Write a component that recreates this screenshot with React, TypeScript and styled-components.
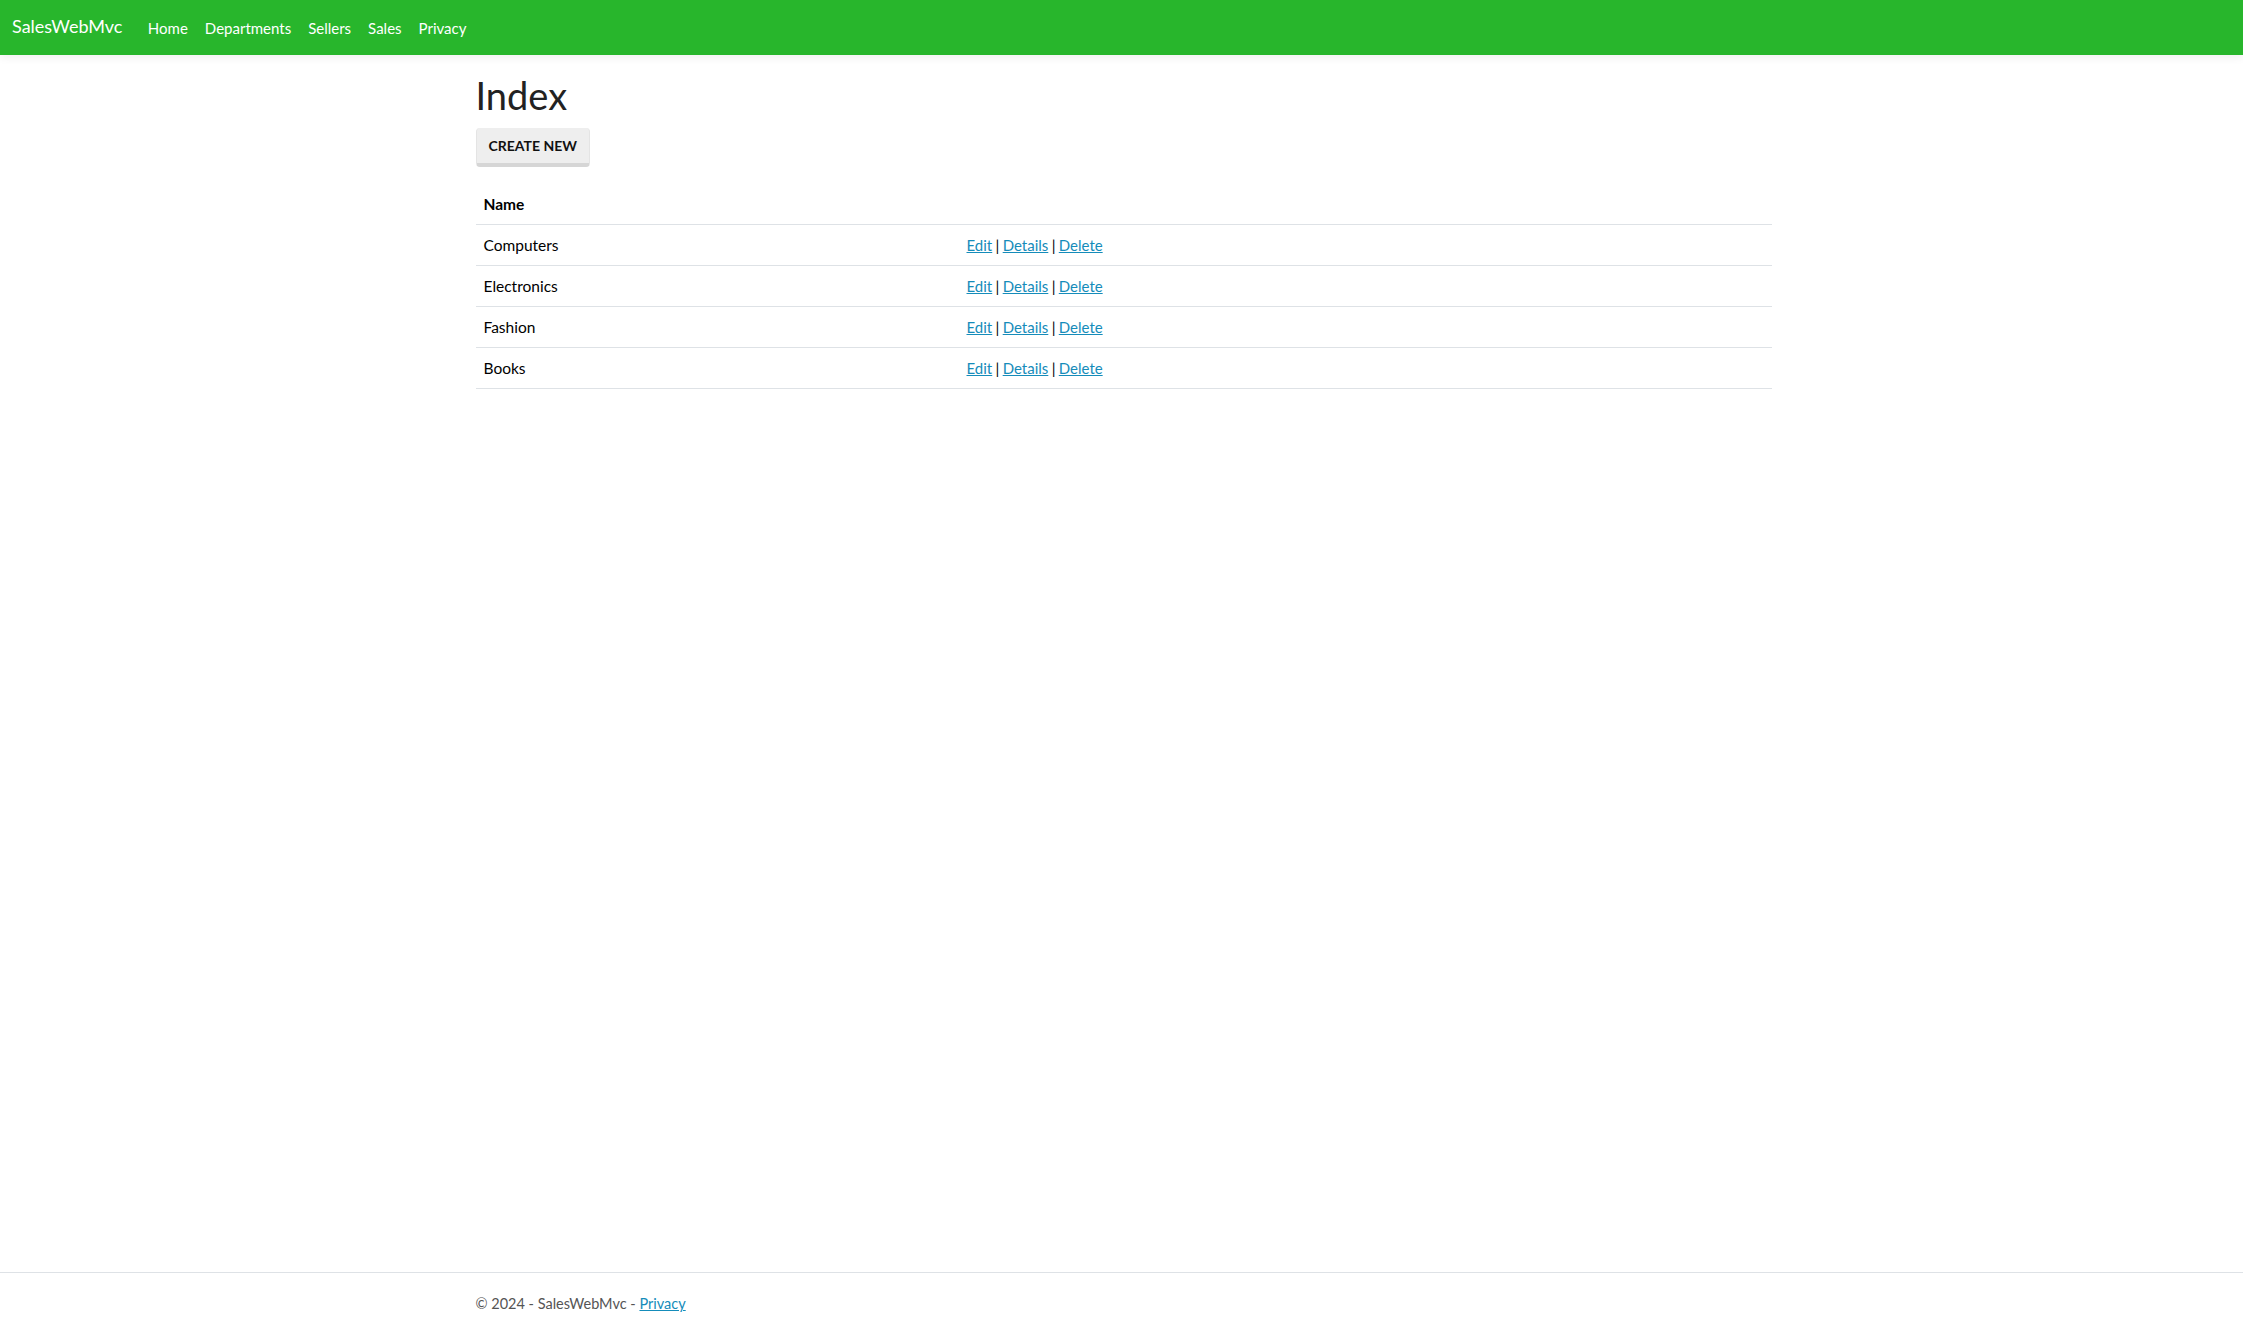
import React from "react";
import styled, { createGlobalStyle } from "styled-components";

const GlobalStyle = createGlobalStyle`
  html, body { margin: 0; padding: 0; background: #fff; }
  body {
    font-family: Lato, "Liberation Sans", sans-serif;
    font-size: 15px;
    line-height: 24px;
    color: #555;
  }
  * { box-sizing: border-box; }
`;

const Page = styled.div`
  min-height: 100vh;
  display: flex;
  flex-direction: column;
`;

const NavBar = styled.nav`
  height: 55px;
  background: #28b62c;
  box-shadow: 0 3px 8px rgba(0, 0, 0, 0.06);
  display: flex;
  align-items: center;
  padding: 0 12px;
`;

const Brand = styled.a`
  color: #fff;
  font-size: 18px;
  line-height: 24px;
  margin-right: 17px;
  margin-bottom: 3px;
  text-decoration: none;
`;

const NavList = styled.ul`
  display: flex;
  list-style: none;
  margin: 0;
  padding: 0;
`;

const NavLink = styled.a`
  display: block;
  color: #fff;
  font-size: 15px;
  line-height: 24px;
  padding: 0 8.5px;
  text-decoration: none;
`;

const Main = styled.main`
  flex: 1;
  padding-top: 17px;
`;

const Container = styled.div`
  width: 1320px;
  margin: 0 auto;
  padding: 0 10px 0 14px;
`;

const Title = styled.h1`
  margin: 0 0 10px;
  font-size: 38px;
  line-height: 46px;
  font-weight: 400;
  color: #222;
`;

const ActionRow = styled.div`
  display: flex;
  margin-bottom: 17px;
`;

const Button = styled.a`
  display: inline-block;
  font-size: 14px;
  line-height: 21px;
  font-weight: 700;
  text-transform: uppercase;
  color: #111;
  background: #eeeeee;
  border-style: solid;
  border-color: #e4e4e4;
  border-bottom-color: #d6d6d6;
  border-width: 0 1px 4px 1px;
  border-radius: 4px;
  padding: 7px 12px;
  text-decoration: none;
`;

const Table = styled.table`
  width: 100%;
  border-collapse: collapse;
  color: #000;
  font-size: 15.5px;
`;

const HeadCell = styled.th`
  text-align: left;
  font-weight: 700;
  padding: 8px;
  border-bottom: 1px solid #dee2e6;
`;

const Cell = styled.td<{ $w?: number }>`
  padding: 8px;
  border-bottom: 1px solid #dee2e6;
  width: ${(p) => (p.$w ? `${p.$w}px` : "auto")};
`;

const ActionsCell = styled(Cell)`
  font-size: 15px;
  word-spacing: -0.5px;
`;

const Link = styled.a`
  color: #158cba;
  text-decoration: underline;
`;

const Footer = styled.footer`
  height: 48px;
  border-top: 1px solid #dee2e6;
  padding-top: 19px;
  color: #555;
  font-size: 14.5px;
  white-space: nowrap;
`;

const departments = ["Computers", "Electronics", "Fashion", "Books"];

export default function App() {
  return (
    <Page>
      <GlobalStyle />
      <NavBar>
        <Brand href="#">SalesWebMvc</Brand>
        <NavList>
          {["Home", "Departments", "Sellers", "Sales", "Privacy"].map((l) => (
            <li key={l}>
              <NavLink href="#">{l}</NavLink>
            </li>
          ))}
        </NavList>
      </NavBar>
      <Main>
        <Container>
          <Title>Index</Title>
          <ActionRow>
            <Button href="#">Create New</Button>
          </ActionRow>
          <Table>
            <thead>
              <tr>
                <HeadCell>Name</HeadCell>
                <HeadCell></HeadCell>
              </tr>
            </thead>
            <tbody>
              {departments.map((d) => (
                <tr key={d}>
                  <Cell $w={483}>{d}</Cell>
                  <ActionsCell>
                    <Link href="#">Edit</Link> | <Link href="#">Details</Link> |{" "}
                    <Link href="#">Delete</Link>
                  </ActionsCell>
                </tr>
              ))}
            </tbody>
          </Table>
        </Container>
      </Main>
      <Footer>
        <Container>
          © 2024 - SalesWebMvc - <Link href="#">Privacy</Link>
        </Container>
      </Footer>
    </Page>
  );
}
